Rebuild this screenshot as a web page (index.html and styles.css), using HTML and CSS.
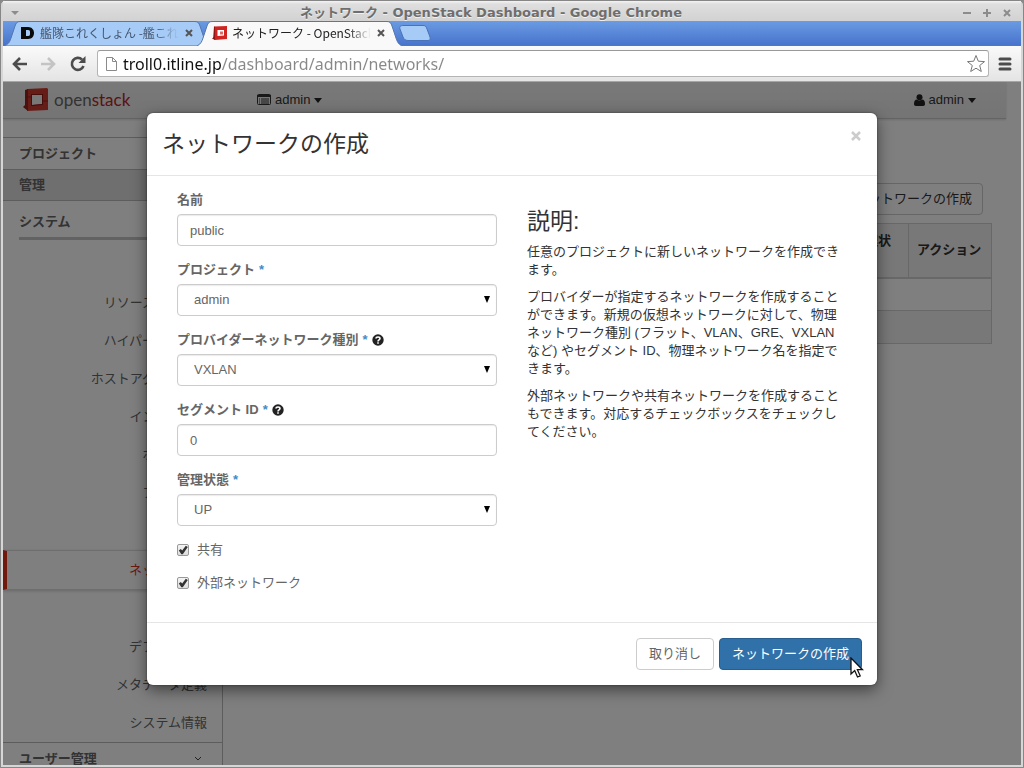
FILE: index.html
```html
<!DOCTYPE html>
<html lang="ja">
<head>
    <meta charset="UTF-8">
    <meta name="viewport" content="width=device-width, initial-scale=1.0">
    <title>ネットワーク - OpenStack Dashboard</title>
    <link rel="stylesheet" href="styles.css">
</head>
<body>
<div class="window">

    <!-- Window title bar -->
    <header class="titlebar">
        <button class="window-btn" aria-label="メニュー">
            <svg width="10" height="10" viewBox="0 0 10 10"><path d="M1 3h8L5 7z" fill="#8c8c8c"/></svg>
        </button>
        <div class="window-title">ネットワーク - OpenStack Dashboard - Google Chrome</div>
        <button class="window-btn" aria-label="最小化">
            <svg width="10" height="10" viewBox="0 0 10 10"><path d="M1 5h8" stroke="#8c8c8c" stroke-width="2"/></svg>
        </button>
        <button class="window-btn" aria-label="最大化">
            <svg width="10" height="10" viewBox="0 0 10 10"><path d="M1 5h8M5 1v8" stroke="#8c8c8c" stroke-width="2"/></svg>
        </button>
        <button class="window-btn" aria-label="閉じる">
            <svg width="10" height="10" viewBox="0 0 10 10"><path d="M2 2l6 6M8 2l-6 6" stroke="#8c8c8c" stroke-width="2"/></svg>
        </button>
    </header>

    <!-- Browser tabs -->
    <nav class="tabstrip">
        <div class="tab">
            <svg class="tab-shape" viewBox="0 0 206 25" preserveAspectRatio="none"><path d="M0 24.5C4 23 5 20 6 17L10 5C11 2 12 .5 15 .5H190C193 .5 194 2 195 5L199 17C200 20 201 23 205 24.5" fill="#a6cbf7" stroke="#5377ae"/></svg>
            <svg class="favicon" width="16" height="16" viewBox="0 0 16 16"><path d="M1 2h7c4 0 6 3 6 6s-2 6-6 6H1z" fill="#0a0a0a"/><path d="M6 5h2c2 0 2 1 2 3s0 3-2 3H6z" fill="#a6cbf7"/></svg>
            <a class="tab-title" href="#">艦隊これくしょん -艦これ-</a>
            <button class="tab-close" aria-label="タブを閉じる">
                <svg width="8" height="8" viewBox="0 0 8 8"><path d="M1 1l6 6M7 1L1 7" stroke="#555" stroke-width="2"/></svg>
            </button>
        </div>
        <div class="tab active">
            <svg class="tab-shape" viewBox="0 0 206 25" preserveAspectRatio="none"><path d="M0 25C4 23 5 20 6 17L10 5C11 2 12 .5 15 .5H190C193 .5 194 2 195 5L199 17C200 20 201 23 205 25" fill="#f9f9f9" stroke="#5377ae"/></svg>
            <svg class="favicon" width="16" height="16" viewBox="0 0 16 16"><path d="M2 1.500L15 1v13l-12 1-2-1.500z" fill="#cf2420"/><path d="M2 1.500l1 .5v13l-3-1.500 2-1.500z" fill="#8e1613"/><path d="M5.500 5H12v5.500l-6.500.5z" fill="#fff"/><path d="M8 6.500h3v3H8z" fill="#dd6a66"/></svg>
            <a class="tab-title" href="#">ネットワーク - OpenStack Dashboard</a>
            <button class="tab-close" aria-label="タブを閉じる">
                <svg width="8" height="8" viewBox="0 0 8 8"><path d="M1 1l6 6M7 1L1 7" stroke="#555" stroke-width="2"/></svg>
            </button>
        </div>
        <button class="new-tab" aria-label="新しいタブ">
            <svg width="32" height="16" viewBox="0 0 32 16"><path d="M4 .5H24C26 .5 27 1 28 4L31 12C31.500 14 31 15.500 29 15.500H9C6 15.500 5 14 4 12L1 4C0 1.500 2 .5 4 .5z" fill="#a6cbf7" stroke="#4a72b8"/></svg>
        </button>
    </nav>

    <!-- Toolbar -->
    <div class="toolbar">
        <button class="tool-btn" aria-label="戻る">
            <svg width="16" height="14" viewBox="0 0 16 14"><path d="M2 7h13M8 1L2 7l6 6" fill="none" stroke="#4c4c4c" stroke-width="2.600"/></svg>
        </button>
        <button class="tool-btn" aria-label="進む">
            <svg width="16" height="14" viewBox="0 0 16 14"><path d="M0 7h13M7 1l6 6-6 6" fill="none" stroke="#c4c4c4" stroke-width="2.600"/></svg>
        </button>
        <button class="tool-btn" aria-label="再読み込み">
            <svg width="16" height="16" viewBox="0 0 16 16"><path d="M12 3.500A6 6 0 1 0 13.500 10" fill="none" stroke="#4c4c4c" stroke-width="2.600"/><path d="M15.500 0v7H8.500z" fill="#4c4c4c"/></svg>
        </button>
        <div class="address-bar">
            <svg width="13" height="16" viewBox="0 0 13 16"><path d="M1.500 1.500h6l4 4v9h-10zM7.500 1.500v4h4" fill="#fff" stroke="#8a8a8a"/></svg>
            <input class="address" type="text" aria-label="アドレス" value="troll0.itline.jp/dashboard/admin/networks/">
            <button class="star" aria-label="ブックマーク">
                <svg width="20" height="20" viewBox="0 0 20 20"><path d="M10 1.500l2.300 5.700 6.200.4-4.800 3.900 1.600 6L10 14.200l-5.300 3.300 1.600-6L1.500 7.600l6.200-.4z" fill="#fff" stroke="#777" stroke-linejoin="round"/></svg>
            </button>
        </div>
        <button class="menu-btn" aria-label="設定">
            <svg width="14" height="14" viewBox="0 0 14 14"><path d="M2 2h10M2 7h10M2 12h10" stroke="#4c4c4c" stroke-width="3" stroke-linecap="round"/></svg>
        </button>
    </div>

    <!-- Web page -->
    <div class="page">
        <div class="topbar">
            <a class="brand" href="#">
                <svg width="26" height="24" viewBox="0 0 26 24"><path d="M4 1l20-1 1 1v21L4 23z" fill="#cf3a2e"/><path d="M2 2l3-1v22l-5-4 2-2z" fill="#96231b"/><path d="M9 7h10v9l-10 1z" fill="#f0f0f0"/><path d="M8 6h12v1H9v11H8zM19 7h1v10l-11 1v-1l10-1z" fill="#8a1d15"/><path d="M2 9h6M20 13h5" stroke="#8f2018"/></svg>
                <span class="brand-open">open<span class="brand-stack">stack</span></span>
            </a>
            <button class="top-menu">
                <svg width="14" height="12" viewBox="0 0 14 12"><rect x=".5" y=".5" width="13" height="10" rx="1" fill="none" stroke="#333"/><path d="M0 1h14v2H0z" fill="#333"/><path d="M2 5h1M2 7h1M2 9h1M4 5h8M4 7h8M4 9h8" stroke="#333"/></svg>
                admin
                <span class="caret"></span>
            </button>
            <button class="top-menu user-menu">
                <svg width="11" height="12" viewBox="0 0 11 12"><circle cx="5.500" cy="3.200" r="3" fill="#222"/><path d="M0 10c0-3 1-4.500 3-4.500 1 1.200 4 1.200 5 0 2 0 3 1.500 3 4.500 0 1-.6 2-2 2H2c-1.400 0-2-1-2-2z" fill="#222"/></svg>
                admin
                <span class="caret"></span>
            </button>
        </div>

        <div class="layout">
            <aside class="sidebar">
                <a class="side-head" href="#">プロジェクト</a>
                <a class="side-head open" href="#">管理</a>
                <h4 class="side-group">システム</h4>
                <ul class="side-list">
                    <li><a href="#">概要</a></li>
                    <li><a href="#">リソース使用状況</a></li>
                    <li><a href="#">ハイパーバイザー</a></li>
                    <li><a href="#">ホストアグリゲート</a></li>
                    <li><a href="#">インスタンス</a></li>
                    <li><a href="#">ボリューム</a></li>
                    <li><a href="#">フレーバー</a></li>
                    <li><a href="#">イメージ</a></li>
                    <li class="current"><a href="#">ネットワーク</a></li>
                    <li><a href="#">ルーター</a></li>
                    <li><a href="#">デフォルト値</a></li>
                    <li><a href="#">メタデータ定義</a></li>
                    <li><a href="#">システム情報</a></li>
                </ul>
                <a class="side-head" href="#">
                    ユーザー管理
                    <svg width="8" height="6" viewBox="0 0 8 6"><path d="M1 1l3 3 3-3" fill="none" stroke="#444"/></svg>
                </a>
            </aside>

            <main class="content">
                <div class="table-actions">
                    <button class="btn">+ネットワークの作成</button>
                </div>
                <table class="data-table">
                    <thead>
                        <tr>
                            <th>プロジェクト</th>
                            <th class="col-state">管理状<br>態</th>
                            <th class="col-action">アクション</th>
                        </tr>
                    </thead>
                    <tbody>
                        <tr><td colspan="3"></td></tr>
                        <tr class="table-foot"><td colspan="3"></td></tr>
                    </tbody>
                </table>
            </main>
        </div>

        <!-- Create network dialog -->
        <div class="backdrop">
            <form class="modal" role="dialog" aria-labelledby="modal-title">
                <div class="modal-header">
                    <h3 id="modal-title">ネットワークの作成</h3>
                    <button type="button" class="close" aria-label="閉じる">
                        <svg width="12" height="12" viewBox="0 0 12 12"><path d="M2 2l8 8M10 2l-8 8" stroke="#ccc" stroke-width="2.500"/></svg>
                    </button>
                </div>

                <div class="modal-body">
                    <div class="fields">
                        <div class="form-group">
                            <label for="name">名前</label>
                            <input class="control" type="text" id="name" value="public">
                        </div>
                        <div class="form-group">
                            <label for="project">プロジェクト <span class="required">*</span></label>
                            <div class="select">
                                <select class="control" id="project"><option>admin</option></select>
                            </div>
                        </div>
                        <div class="form-group">
                            <label for="network-type">プロバイダーネットワーク種別 <span class="required">*</span>
                                <svg class="help" width="12" height="12" viewBox="0 0 12 12"><circle cx="6" cy="6" r="5.700" fill="#222"/><path d="M4 4.600C4 2.400 8 2.400 8 4.600 8 6 6 5.800 6 7.400M6 8.300v1.500" fill="none" stroke="#fff" stroke-width="1.600"/></svg>
                            </label>
                            <div class="select">
                                <select class="control" id="network-type"><option>VXLAN</option></select>
                            </div>
                        </div>
                        <div class="form-group">
                            <label for="segment">セグメント ID <span class="required">*</span>
                                <svg class="help" width="12" height="12" viewBox="0 0 12 12"><circle cx="6" cy="6" r="5.700" fill="#222"/><path d="M4 4.600C4 2.400 8 2.400 8 4.600 8 6 6 5.800 6 7.400M6 8.300v1.500" fill="none" stroke="#fff" stroke-width="1.600"/></svg>
                            </label>
                            <input class="control" type="text" id="segment" value="0">
                        </div>
                        <div class="form-group">
                            <label for="state">管理状態 <span class="required">*</span></label>
                            <div class="select">
                                <select class="control" id="state"><option>UP</option></select>
                            </div>
                        </div>
                        <div class="checkbox">
                            <input type="checkbox" id="shared" checked>
                            <label for="shared">共有</label>
                        </div>
                        <div class="checkbox">
                            <input type="checkbox" id="external" checked>
                            <label for="external">外部ネットワーク</label>
                        </div>
                    </div>

                    <div class="description">
                        <h3>説明:</h3>
                        <p>任意のプロジェクトに新しいネットワークを作成できます。</p>
                        <p>プロバイダーが指定するネットワークを作成することができます。新規の仮想ネットワークに対して、物理ネットワーク種別 (フラット、VLAN、GRE、VXLAN など) やセグメント ID、物理ネットワーク名を指定できます。</p>
                        <p>外部ネットワークや共有ネットワークを作成することもできます。対応するチェックボックスをチェックしてください。</p>
                    </div>
                </div>

                <div class="modal-footer">
                    <button type="button" class="btn">取り消し</button>
                    <div class="submit">
                        <button type="button" class="btn primary">ネットワークの作成</button>
                        <svg class="cursor" width="14" height="22" viewBox="0 0 14 22"><path d="M1 1v16l3.700-3.400L7.500 20l2.700-1.200-2.800-6.100H12.500z" fill="#fff" stroke="#111" stroke-width="1.300"/></svg>
                    </div>
                </div>
            </form>
        </div>
    </div>

</div>
</body>
</html>
```
FILE: styles.css
```css
* {
    box-sizing: border-box;
}

body {
    margin: 0;
    font-family: "Liberation Sans", "Noto Sans CJK JP", sans-serif;
    font-size: 13px;
    line-height: 18px;
    color: #333;
    background-color: #888;
}

button,
input,
select {
    font: inherit;
    color: inherit;
}

button {
    background: none;
    border: none;
    padding: 0;
}

a {
    color: inherit;
    text-decoration: none;
}

svg {
    display: block;
    flex: none;
}

h3,
h4,
p,
ul {
    margin: 0;
    padding: 0;
    font-weight: normal;
}

/* Window frame */
.window {
    display: flex;
    flex-direction: column;
    height: 100vh;
    padding: 0 2px 2px;
    border: 1px solid #868686;
    border-radius: 5px 5px 0 0;
    background-color: #d6d6d6;
}

.titlebar {
    display: flex;
    align-items: center;
    height: 20px;
    padding: 4px 4px 0 2px;
    background: linear-gradient(#f4f4f4, #dedede 3px, #d2d2d2);
}

.window-btn {
    display: flex;
    justify-content: center;
    width: 20px;
}

.window-title {
    flex: 1;
    text-align: center;
    font-family: "DejaVu Sans", "Noto Sans CJK JP", sans-serif;
    font-weight: bold;
    color: #6e6e6e;
    text-shadow: 0 1px #f0f0f0;
    white-space: nowrap;
    overflow: hidden;
}

/* Tabs */
.tabstrip {
    display: flex;
    align-items: center;
    height: 25px;
    padding-left: 2px;
    background: linear-gradient(#6b9be3, #4874cc);
    border-bottom: 1px solid #5377ae;
}

.tab {
    position: relative;
    display: flex;
    align-items: center;
    width: 206px;
    height: 25px;
    margin-right: -14px;
    padding: 0 18px 0 15px;
    font-family: "Noto Sans CJK JP", sans-serif;
    font-size: 12px;
    color: #46566e;
}

.tab.active {
    z-index: 1;
    color: #222;
}

.tab-shape {
    position: absolute;
    left: 0;
    top: 0;
    width: 100%;
    height: 100%;
}

.favicon,
.tab-close {
    position: relative;
}

.tab-title {
    position: relative;
    flex: 1;
    margin: 0 6px 0 4px;
    overflow: hidden;
    white-space: nowrap;
    -webkit-mask-image: linear-gradient(to left, transparent, #000 24px);
    mask-image: linear-gradient(to left, transparent, #000 24px);
}

.new-tab {
    margin-left: 10px;
}

/* Toolbar */
.toolbar {
    display: flex;
    align-items: center;
    height: 36px;
    padding: 0 9px;
    background: linear-gradient(#fafafa, #e4e4e4);
    border-bottom: 1px solid #a6a6a6;
}

.tool-btn {
    width: 29px;
}

.address-bar {
    display: flex;
    align-items: center;
    flex: 1;
    height: 27px;
    margin: 0 9px 0 -2px;
    padding: 0 2px 0 7px;
    border: 1px solid #b4b4b4;
    border-top-color: #999;
    border-radius: 3px;
    background-color: #fff;
}

/* Host name is black, the path is grey */
.address {
    flex: 1;
    height: 24px;
    margin-left: 5px;
    padding: 0;
    border: none;
    outline: none;
    font-family: "Noto Sans", sans-serif;
    font-size: 16px;
    color: transparent;
    background: linear-gradient(to right, #111 99px, #888 99px);
    -webkit-background-clip: text;
    background-clip: text;
}

/* Page */
.page {
    position: relative;
    flex: 1;
    display: flex;
    flex-direction: column;
    min-height: 0;
    padding-right: 15px;
    overflow: hidden;
    background-color: #fff;
}

.topbar {
    display: flex;
    align-items: center;
    flex: none;
    height: 37px;
    padding: 0 30px 0 20px;
    background: linear-gradient(#f2f2f2, #e9e9e9);
    border-bottom: 1px solid #c8c8c8;
    box-shadow: 0 1px 2px rgba(0, 0, 0, 0.15);
}

.brand {
    display: flex;
    align-items: center;
    gap: 5px;
    width: 234px;
}

.brand-open {
    font-family: Lato, sans-serif;
    font-size: 17px;
    color: #666;
}

.brand-stack {
    color: #b8271d;
}

.top-menu {
    display: flex;
    align-items: center;
    gap: 4px;
}

.user-menu {
    margin-left: auto;
}

.caret {
    border: 4px solid transparent;
    border-top: 5px solid #222;
    border-bottom: none;
}

.layout {
    display: flex;
    flex: 1;
    min-height: 0;
}

/* Sidebar */
.sidebar {
    flex: none;
    width: 220px;
    padding-top: 18px;
    border-right: 1px solid #bbb;
    color: #666;
}

.side-head {
    display: flex;
    align-items: center;
    justify-content: space-between;
    height: 32px;
    padding: 0 20px 0 16px;
    border-top: 1px solid #bbb;
    font-weight: bold;
}

.side-head.open {
    background-color: #dedede;
    border-bottom: 1px solid #bbb;
}

.side-group {
    margin: 12px 16px 0;
    padding-bottom: 6px;
    border-bottom: 3px solid #c4c4c4;
    font-weight: bold;
}

.side-list {
    padding: 6px 0 0;
    list-style: none;
    text-align: right;
}

.side-list a {
    display: block;
    padding: 10px 15px;
}

.side-list .current {
    border: 1px solid #ddd;
    border-width: 1px 0;
    border-left: 4px solid #e5331c;
    box-shadow: 0 1px 3px rgba(0, 0, 0, 0.2);
    color: #d9331f;
}

/* Networks table */
.content {
    flex: 1;
    padding: 64px 14px 0;
}

.table-actions {
    display: flex;
    justify-content: flex-end;
    padding: 0 9px 8px 0;
}

.table-actions .btn {
    padding: 0 10px;
    color: #333;
}

.data-table {
    width: 100%;
    border-collapse: collapse;
}

.data-table th,
.data-table td {
    height: 33px;
    padding: 8px;
    border: 1px solid #d0d0d0;
    text-align: left;
}

.data-table th {
    height: 54px;
    background-color: #f0f0f0;
    border-bottom-width: 2px;
}

.data-table .col-state {
    width: 72px;
    padding-left: 15px;
}

.data-table .col-action {
    width: 83px;
}

.data-table .table-foot {
    background-color: #f0f0f0;
}

/* Dialog */
.backdrop {
    position: absolute;
    inset: 0;
    display: flex;
    align-items: flex-start;
    justify-content: center;
    padding-top: 31px;
    background-color: rgba(0, 0, 0, 0.5);
}

.modal {
    width: 730px;
    border-radius: 6px;
    background-color: #fff;
    box-shadow: 0 5px 15px rgba(0, 0, 0, 0.5), 0 0 2px rgba(0, 0, 0, 0.5);
}

.modal-header {
    display: flex;
    align-items: flex-start;
    justify-content: space-between;
    padding: 17px 15px;
    border-bottom: 1px solid #e5e5e5;
}

.modal h3 {
    font-size: 23px;
    line-height: 28px;
}

.modal-body {
    display: grid;
    grid-template-columns: 1fr 1fr;
    gap: 30px;
    padding: 15px 30px;
}

.form-group {
    margin-bottom: 15px;
    color: #666;
}

.form-group label {
    display: flex;
    align-items: center;
    gap: 4px;
    margin-bottom: 5px;
    font-weight: bold;
}

.required {
    color: #428bca;
}

.control {
    display: block;
    width: 100%;
    height: 32px;
    padding: 0 12px;
    border: 1px solid #ccc;
    border-radius: 4px;
    background-color: #fff;
    box-shadow: inset 0 1px 1px rgba(0, 0, 0, 0.08);
    appearance: none;
}

.select {
    position: relative;
}

.select .control {
    padding: 0 16px;
}

.select::after {
    content: "";
    position: absolute;
    right: 7px;
    top: 12px;
    border: 3px solid transparent;
    border-top: 7px solid #000;
    border-bottom: none;
}

.checkbox {
    display: flex;
    align-items: center;
    gap: 8px;
    margin-bottom: 15px;
    color: #666;
}

.checkbox input {
    width: 12px;
    height: 12px;
    margin: 0;
    border: 1px solid #999;
    border-radius: 2px;
    background: linear-gradient(#f4f4f4, #ddd);
    appearance: none;
}

.checkbox input:checked::after {
    content: "";
    display: block;
    width: 10px;
    height: 10px;
    background-color: #333;
    clip-path: polygon(8% 54%, 28% 40%, 42% 56%, 78% 8%, 98% 20%, 48% 92%, 34% 92%);
}

.description {
    padding-top: 16px;
}

.description h3 {
    margin-bottom: 8px;
}

.description p {
    margin-bottom: 9px;
}

.modal-footer {
    display: flex;
    justify-content: flex-end;
    gap: 5px;
    padding: 15px;
    border-top: 1px solid #e5e5e5;
}

.btn {
    height: 32px;
    padding: 0 12px;
    border: 1px solid #ccc;
    border-radius: 4px;
    background-color: #fff;
    color: #666;
}

.btn.primary {
    border-color: #285e8e;
    background-color: #3071a9;
    color: #fff;
}

.submit {
    position: relative;
}

/* Mouse pointer resting on the submit button */
.cursor {
    position: absolute;
    right: -2px;
    top: 19px;
}
```
